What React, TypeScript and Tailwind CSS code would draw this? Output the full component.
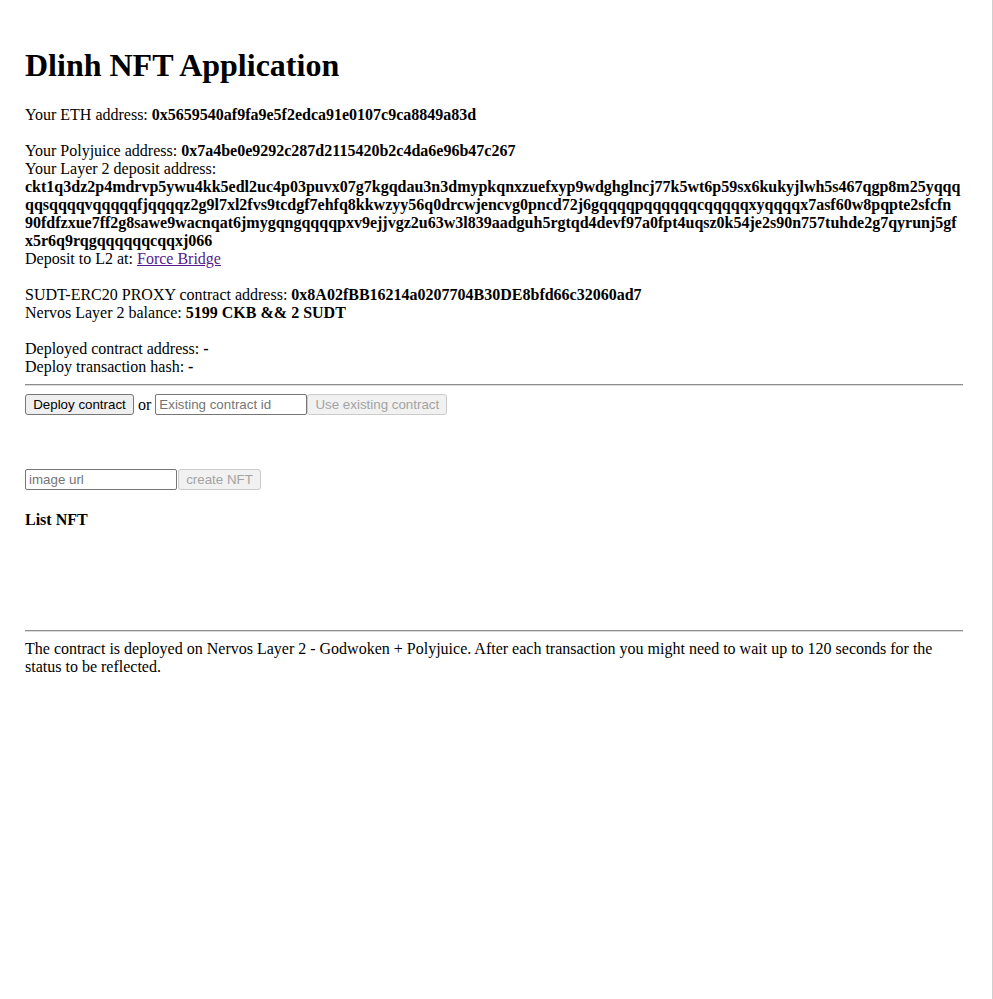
export default function App() {
  const depositLines = [
    'ckt1q3dz2p4mdrvp5ywu4kk5edl2uc4p03puvx07g7kgqdau3n3dmypkqnxzuefxyp9wdghglncj77k5wt6p59sx6kukyjlwh5s467qgp8m25yqqq',
    'qqsqqqqvqqqqqfjqqqqz2g9l7xl2fvs9tcdgf7ehfq8kkwzyy56q0drcwjencvg0pncd72j6gqqqqpqqqqqqcqqqqqxyqqqqx7asf60w8pqpte2sfcfn',
    '90fdfzxue7ff2g8sawe9wacnqat6jmygqngqqqqpxv9ejjvgz2u63w3l839aadguh5rgtqd4devf97a0fpt4uqsz0k54je2s90n757tuhde2g7qyrunj5gf',
    'x5r6q9rqgqqqqqqcqqxj066',
  ];

  return (
    <div className="min-h-screen bg-white border-r border-[#cfcfcf] text-black font-['Liberation_Serif',serif] text-[16px] leading-[18px]">
      <div className="w-[938px] ml-[25px] pt-[47px]">
        <h1 className="text-[32px] leading-[37px] font-bold mb-[21px] mt-0">Dlinh NFT Application</h1>

        {/* Addresses */}
        <div className="pt-px">
          Your ETH address: <b>0x5659540af9fa9e5f2edca91e0107c9ca8849a83d</b>
          <br />
          <br />
          Your Polyjuice address: <b>0x7a4be0e9292c287d2115420b2c4da6e96b47c267</b>
          <br />
          Your Layer 2 deposit address:
          <b className="block">
            {depositLines.map((l) => (
              <span key={l} className="block whitespace-nowrap">
                {l}
              </span>
            ))}
          </b>
          Deposit to L2 at:{' '}
          <a href="#" className="text-[#551a8b] underline">
            Force Bridge
          </a>
          <br />
          <br />
          SUDT-ERC20 PROXY contract address: <b>0x8A02fBB16214a0207704B30DE8bfd66c32060ad7</b>
          <br />
          Nervos Layer 2 balance: <b>5199 CKB &amp;&amp; 2 SUDT</b>
          <br />
          <br />
          Deployed contract address: <b>-</b>
          <br />
          Deploy transaction hash: <b>-</b>
        </div>

        <div className="mt-[8px] border-t border-b border-t-[#8d8d8d] border-b-[#dcdcdc]" />

        {/* Deploy controls */}
        <div className="mt-[8px] flex items-center h-[21px]">
          <button className="w-[109px] h-[21px] bg-[#efefef] border border-[#767676] rounded-[3px] font-['Liberation_Sans',sans-serif] text-[13.333px] leading-[15px] text-black">
            Deploy contract
          </button>
          <span className="mx-[4px]">or</span>
          <input
            placeholder="Existing contract id"
            className="w-[152px] h-[21px] px-[3px] border border-[#767676] rounded-[2px] font-['Liberation_Sans',sans-serif] text-[13.333px] placeholder:text-[#757575] outline-none"
          />
          <button
            disabled
            className="w-[140px] h-[21px] bg-[#f1f1f1] border border-[#cbcbcb] rounded-[3px] font-['Liberation_Sans',sans-serif] text-[13.333px] leading-[15px] text-[#a3a3a3]"
          >
            Use existing contract
          </button>
        </div>

        {/* Create NFT */}
        <div className="mt-[54px] flex items-center h-[21px]">
          <input
            placeholder="image url"
            className="w-[152px] h-[21px] px-[3px] border border-[#767676] rounded-[2px] font-['Liberation_Sans',sans-serif] text-[13.333px] placeholder:text-[#757575] outline-none"
          />
          <button
            disabled
            className="ml-px w-[83px] h-[21px] bg-[#f1f1f1] border border-[#cbcbcb] rounded-[3px] font-['Liberation_Sans',sans-serif] text-[13.333px] leading-[15px] text-[#a3a3a3]"
          >
            create NFT
          </button>
        </div>

        <h4 className="mt-[21px] font-bold">List NFT</h4>

        <div className="mt-[101px] border-t border-b border-t-[#8d8d8d] border-b-[#dcdcdc]" />

        <div className="mt-[8px]">
          The contract is deployed on Nervos Layer 2 - Godwoken + Polyjuice. After each transaction you might need to wait up to 120 seconds for the status to be reflected.
        </div>
      </div>
    </div>
  );
}
